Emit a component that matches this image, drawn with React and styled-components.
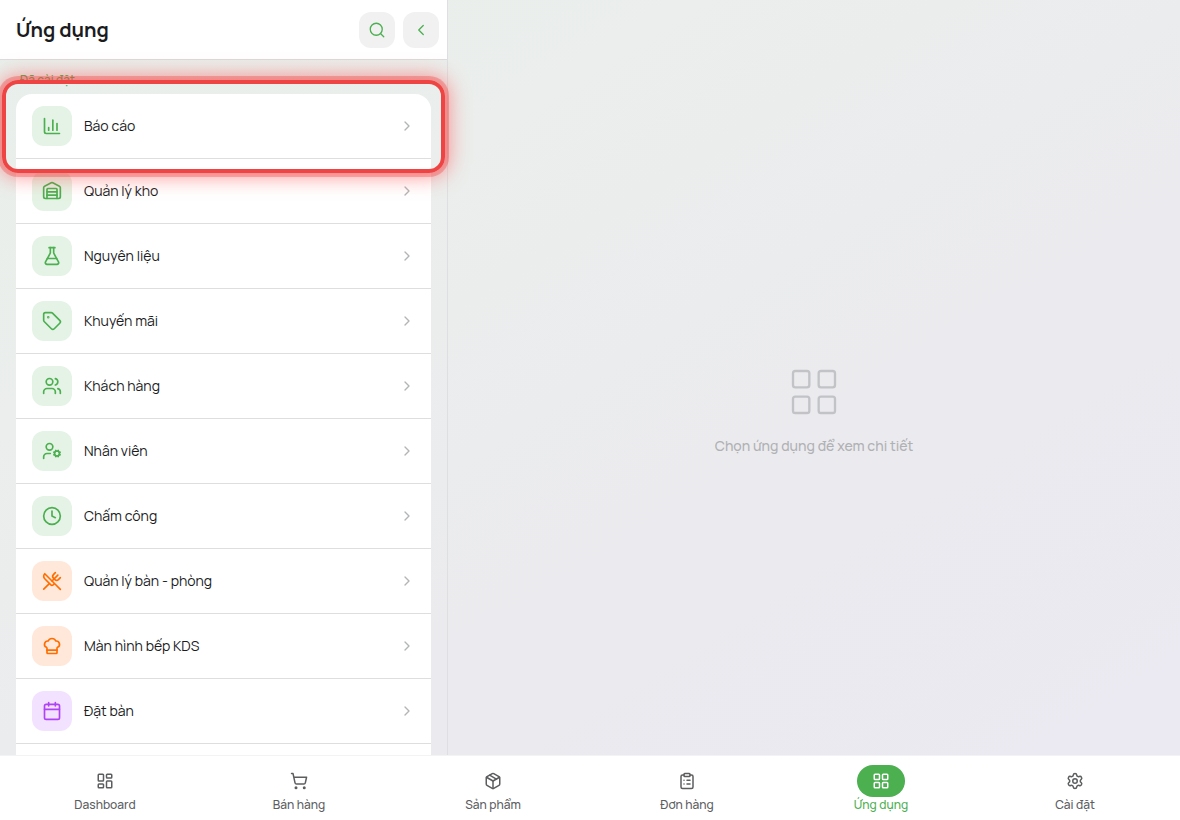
import React from 'react';
import styled, { createGlobalStyle } from 'styled-components';
import {
  ChartColumn,
  Warehouse,
  FlaskConical,
  Tag,
  Users,
  UserCog,
  Clock,
  UtensilsCrossed,
  ChefHat,
  Calendar,
  ChevronRight,
  ChevronLeft,
  Search,
  LayoutDashboard,
  LayoutGrid,
  ShoppingCart,
  Package,
  ClipboardList,
  Settings,
} from 'lucide-react';

const GlobalStyle = createGlobalStyle`
* {
  box-sizing: border-box;
}
body {
  margin: 0;
  font-family: Manrope, Inter, "Noto Sans", sans-serif;
  color: #1a1c1e;
}
`;

const Page = styled.div`
  display: flex;
  flex-direction: column;
  height: 100vh;
  overflow: hidden;
  background: linear-gradient(148deg, #e8efeb 0%, #ebeeec 28%, #ebecee 48%, #ebeaef 68%, #ebe9f2 100%);
`;

const Main = styled.main`
  display: flex;
  flex: 1;
  min-height: 0;
`;

const Sidebar = styled.section`
  position: relative;
  display: flex;
  flex-direction: column;
  width: 38%;
  max-width: 448px;
  min-width: 300px;
  border-right: 1px solid #dddfe0;
`;

const Header = styled.header`
  display: flex;
  align-items: center;
  gap: 8px;
  height: 60px;
  flex-shrink: 0;
  padding: 0 8px 0 16px;
  background: #fff;
  border-bottom: 1px solid #dcdcdc;
`;

const Title = styled.h1`
  flex: 1;
  margin: 0;
  font-size: 20px;
  line-height: 28px;
  font-weight: 700;
`;

const HeaderButton = styled.button`
  display: flex;
  align-items: center;
  justify-content: center;
  width: 36px;
  height: 36px;
  padding: 0;
  border: none;
  border-radius: 12px;
  background: #f1f1f1;
  color: #4caf50;
  cursor: pointer;
`;

const Scroller = styled.div`
  display: flex;
  flex-direction: column;
  flex: 1;
  min-height: 0;
  overflow: hidden;
  padding: 12px 16px 0;
`;

const SectionLabel = styled.h2`
  margin: 0 0 6px;
  padding: 0 4px;
  font-size: 12px;
  line-height: 16px;
  font-weight: 500;
  color: #4caf50;
`;

const AppList = styled.ul`
  flex: 1;
  margin: 0;
  padding: 0;
  list-style: none;
  background: #fff;
  border-radius: 16px 16px 0 0;
`;

const AppItem = styled.li`
  border-bottom: 1px solid #dedede;
`;

const AppButton = styled.button`
  display: flex;
  align-items: center;
  gap: 12px;
  width: 100%;
  height: 64px;
  padding: 0 16px;
  border: none;
  background: none;
  font: inherit;
  font-size: 14px;
  color: inherit;
  text-align: left;
  cursor: pointer;
`;

const tones = {
  green: { bg: '#e4f3e5', fg: '#4caf50' },
  orange: { bg: '#ffe8da', fg: '#ff6d00' },
  purple: { bg: '#f2e2ff', fg: '#b044f5' },
};

const IconTile = styled.span`
  display: flex;
  align-items: center;
  justify-content: center;
  width: 40px;
  height: 40px;
  border-radius: 12px;
  background: ${props => tones[props.$tone].bg};
  color: ${props => tones[props.$tone].fg};
`;

const AppName = styled.span`
  flex: 1;
  line-height: 20px;
`;

const Arrow = styled(ChevronRight)`
  color: #b3b4b6;
`;

// ring around the first app, glows over the header and the detail pane
const Highlight = styled.div`
  position: absolute;
  z-index: 2;
  top: 80px;
  left: 2px;
  right: 2px;
  height: 93px;
  border: 4px solid #ef4444;
  border-radius: 16px;
  box-shadow: 0 0 0 4px rgba(239, 68, 68, 0.35), 0 0 20px 4px rgba(255, 68, 68, 0.55);
  pointer-events: none;
`;

const Detail = styled.section`
  display: flex;
  flex: 1;
  flex-direction: column;
  align-items: center;
  justify-content: center;
  gap: 16px;
  padding-top: 64px;
  color: #b0b1b4;
`;

const DetailIcon = styled(LayoutGrid)`
  color: #c2c3c6;
`;

const DetailText = styled.p`
  margin: 0;
  font-size: 14px;
  line-height: 20px;
  font-weight: 500;
`;

const BottomNav = styled.nav`
  display: flex;
  flex-shrink: 0;
  height: 65px;
  padding: 9px 8px 0;
  background: #fff;
  border-top: 1px solid #f3f3f4;
`;

const NavButton = styled.button`
  display: flex;
  flex: 1;
  flex-direction: column;
  align-items: center;
  padding: 0;
  border: none;
  background: none;
  font: inherit;
  font-size: 12px;
  line-height: 16px;
  font-weight: 500;
  color: ${props => (props.$active ? '#4caf50' : '#5c5d5f')};
  cursor: pointer;
`;

const NavPill = styled.span`
  display: flex;
  align-items: center;
  justify-content: center;
  width: 48px;
  height: 32px;
  border-radius: 16px;
  background: ${props => (props.$active ? '#4caf50' : 'transparent')};
  color: ${props => (props.$active ? '#fff' : 'inherit')};
`;

const apps = [
  { name: 'Báo cáo', icon: ChartColumn, tone: 'green' },
  { name: 'Quản lý kho', icon: Warehouse, tone: 'green' },
  { name: 'Nguyên liệu', icon: FlaskConical, tone: 'green' },
  { name: 'Khuyến mãi', icon: Tag, tone: 'green' },
  { name: 'Khách hàng', icon: Users, tone: 'green' },
  { name: 'Nhân viên', icon: UserCog, tone: 'green' },
  { name: 'Chấm công', icon: Clock, tone: 'green' },
  { name: 'Quản lý bàn - phòng', icon: UtensilsCrossed, tone: 'orange' },
  { name: 'Màn hình bếp KDS', icon: ChefHat, tone: 'orange' },
  { name: 'Đặt bàn', icon: Calendar, tone: 'purple' },
];

const tabs = [
  { name: 'Dashboard', icon: LayoutDashboard },
  { name: 'Bán hàng', icon: ShoppingCart },
  { name: 'Sản phẩm', icon: Package },
  { name: 'Đơn hàng', icon: ClipboardList },
  { name: 'Ứng dụng', icon: LayoutGrid, active: true },
  { name: 'Cài đặt', icon: Settings },
];

function App() {
  return (
    <Page>
      <GlobalStyle />
      <Main>
        <Sidebar>
          <Header>
            <Title>Ứng dụng</Title>
            <HeaderButton aria-label="Tìm kiếm"><Search size={18} strokeWidth={1.75} /></HeaderButton>
            <HeaderButton aria-label="Thu gọn"><ChevronLeft size={18} strokeWidth={1.75} /></HeaderButton>
          </Header>
          <Scroller>
            <SectionLabel>Đã cài đặt</SectionLabel>
            <AppList>
              {apps.map(app => (
                <AppItem key={app.name}>
                  <AppButton>
                    <IconTile $tone={app.tone}><app.icon size={20} /></IconTile>
                    <AppName>{app.name}</AppName>
                    <Arrow size={16} />
                  </AppButton>
                </AppItem>
              ))}
            </AppList>
          </Scroller>
          <Highlight />
        </Sidebar>
        <Detail>
          <DetailIcon size={56} strokeWidth={1} />
          <DetailText>Chọn ứng dụng để xem chi tiết</DetailText>
        </Detail>
      </Main>
      <BottomNav>
        {tabs.map(tab => (
          <NavButton key={tab.name} $active={tab.active}>
            <NavPill $active={tab.active}><tab.icon size={18} /></NavPill>
            {tab.name}
          </NavButton>
        ))}
      </BottomNav>
    </Page>
  );
}

export default App;
